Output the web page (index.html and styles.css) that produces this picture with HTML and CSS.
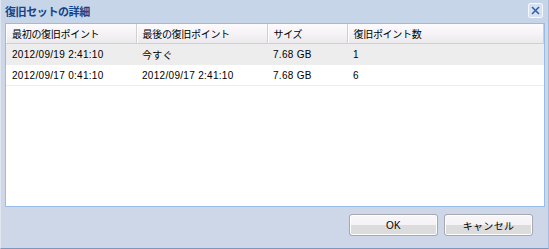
FILE: index.html
```html
<!DOCTYPE html>
<html lang="ja">
<head>
<meta charset="utf-8">
<link rel="stylesheet" href="styles.css">
</head>
<body>
<div class="window">
  <div class="titlebar">
    <span class="title">復旧セットの詳細</span>
    <span class="close">
      <svg width="11" height="11" viewBox="0 0 11 11"><path d="M2 2 L9 9 M9 2 L2 9" stroke="#3a5fa8" stroke-width="1.6" fill="none"/></svg>
    </span>
  </div>
  <div class="grid">
    <table>
      <colgroup>
        <col class="c1"><col class="c2"><col class="c3"><col>
      </colgroup>
      <thead>
        <tr>
          <th>最初の復旧ポイント</th>
          <th>最後の復旧ポイント</th>
          <th>サイズ</th>
          <th class="last">復旧ポイント数</th>
        </tr>
      </thead>
      <tbody>
        <tr class="alt">
          <td>2012/09/19 2:41:10</td>
          <td>今すぐ</td>
          <td>7.68 GB</td>
          <td>1</td>
        </tr>
        <tr>
          <td>2012/09/17 0:41:10</td>
          <td>2012/09/17 2:41:10</td>
          <td>7.68 GB</td>
          <td>6</td>
        </tr>
      </tbody>
    </table>
  </div>
  <div class="footer">
    <button class="btn">OK</button>
    <button class="btn">キャンセル</button>
  </div>
</div>
</body>
</html>
```
FILE: styles.css
```css
html, body {
  margin: 0;
  padding: 0;
  background: #cdd7e8;
}
body {
  font-family: "Liberation Sans", "Noto Sans CJK JP", sans-serif;
  font-size: 10px;
  color: #000;
}
.window {
  width: 549px;
  height: 249px;
  box-sizing: border-box;
  background: #cdd7e8;
  border-left: 1px solid #dfe6f1;
  border-right: 1px solid #a9bbd8;
  border-bottom: 1px solid #7f96bd;
  display: flex;
  flex-direction: column;
}
.titlebar {
  height: 23px;
  background: #c6d6e8;
  display: flex;
  align-items: center;
  justify-content: space-between;
  padding: 0 5px 0 4px;
  box-sizing: border-box;
}
.title {
  font-family: "Noto Sans CJK JP", sans-serif;
  font-weight: bold;
  font-size: 11px;
  letter-spacing: -0.4px;
  color: #15428b;
  margin-top: -2px;
}
.close {
  width: 13px;
  height: 13px;
  border: 1px solid #f4f7fb;
  border-radius: 2px;
  background: #d6e2f1;
  display: flex;
  align-items: center;
  justify-content: center;
  margin-top: -2px;
}
.grid {
  margin: 0 3px 0 4px;
  height: 184px;
  box-sizing: border-box;
  background: #fff;
  border: 1px solid #99bbe8;
}
table {
  width: 100%;
  border-collapse: collapse;
  table-layout: fixed;
}
col.c1 { width: 130px; }
col.c2 { width: 131px; }
col.c3 { width: 80px; }
th {
  height: 19px;
  text-align: left;
  font-weight: normal;
  padding: 0 0 0 6px;
  background: linear-gradient(#fdfbfd, #f4f1f4 60%, #ebe9eb);
  border-right: 1px solid #d0d0d0;
  border-bottom: 1px solid #d0d0d0;
  box-shadow: inset 1px 0 0 #ffffff;
  font-family: "Noto Sans CJK JP", sans-serif;
  letter-spacing: -0.3px;
}
td {
  height: 20px;
  padding: 0 0 0 6px;
  white-space: nowrap;
  letter-spacing: 0.3px;
  border-bottom: 1px solid #ededed;
}
tr.alt td {
  background: #ededed;
}
.footer {
  display: flex;
  justify-content: flex-end;
  gap: 6px;
  padding: 7px 15px 0 0;
}
.btn {
  width: 89px;
  height: 22px;
  margin: 0;
  padding: 0;
  border: 1px solid #a3a8b2;
  border-radius: 3px;
  background: linear-gradient(#f8f6f8 0%, #f4f2f4 50%, #dcdcdc 50%, #dcdcdc 100%);
  font-family: "Liberation Sans", "Noto Sans CJK JP", sans-serif;
  font-size: 10px;
  letter-spacing: 0.3px;
  color: #000;
  box-shadow: inset 0 0 0 1px #ffffff;
}
```
